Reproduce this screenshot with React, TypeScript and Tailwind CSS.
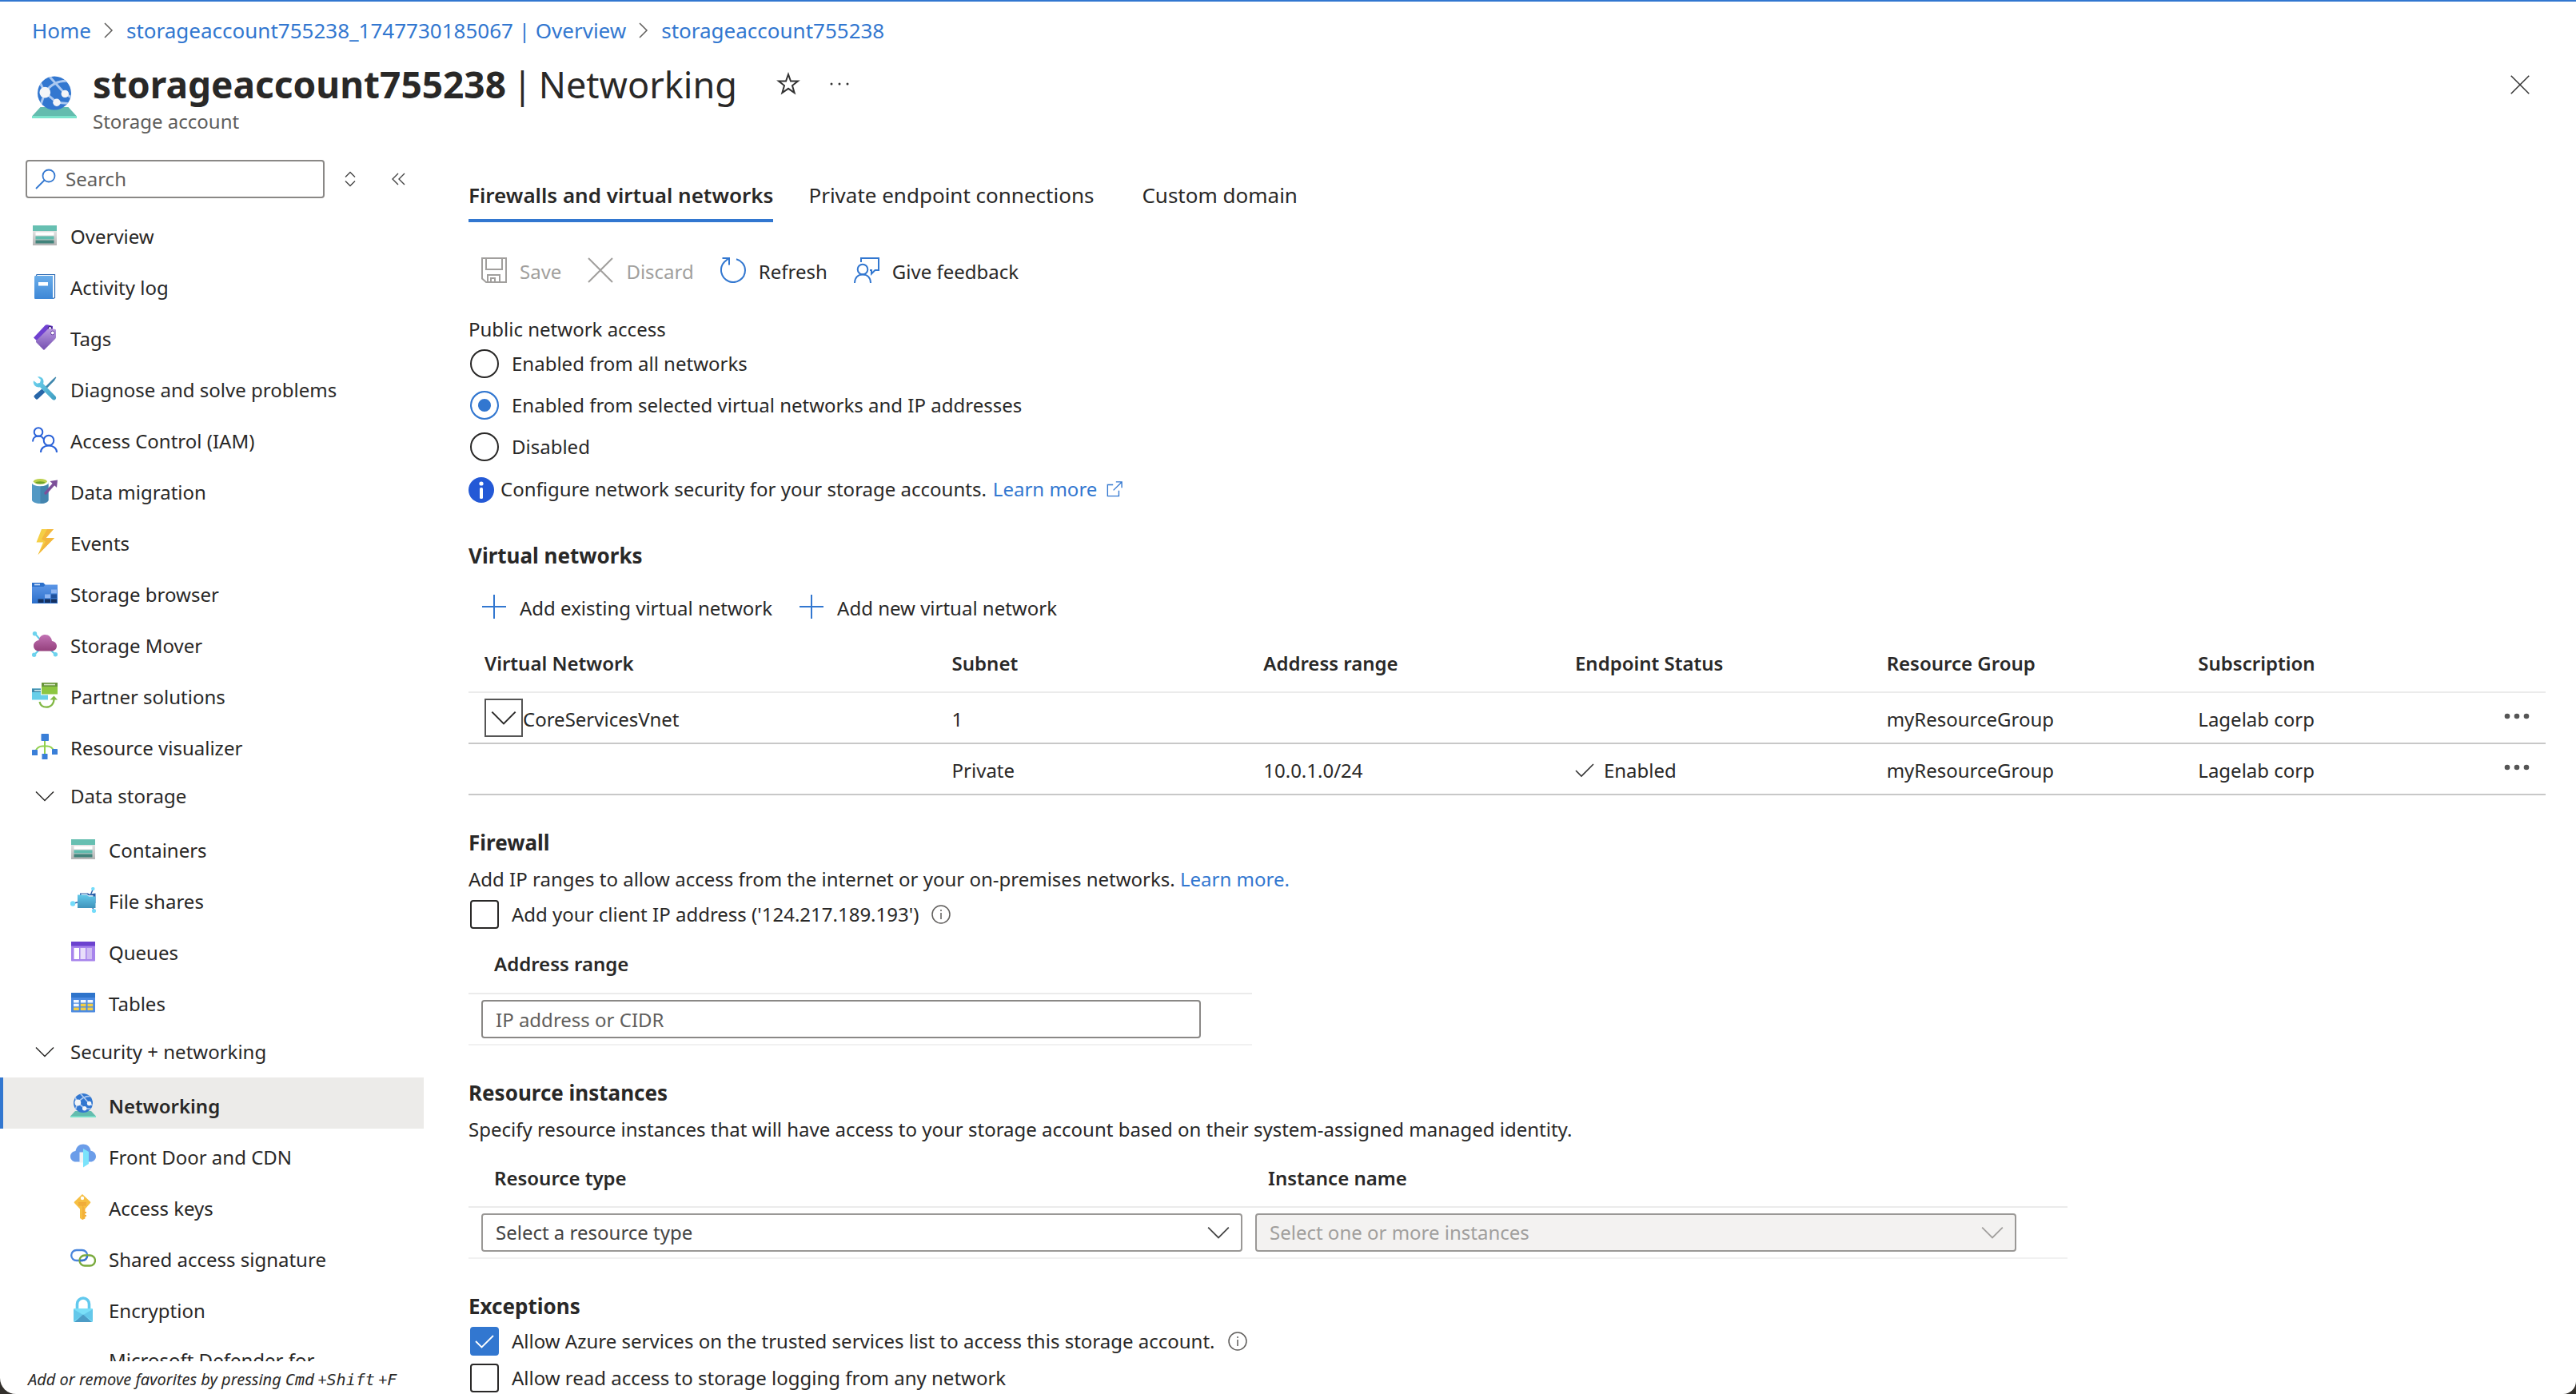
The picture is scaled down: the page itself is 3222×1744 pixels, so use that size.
import { useState, type ReactNode } from 'react';

/* ---------- Icons ---------- */

type IconProps = { className?: string };

function Svg({ children, className = 'size-8', box = '0 0 32 32' }: { children: ReactNode; className?: string; box?: string }) {
  return (
    <svg viewBox={box} className={`${className} shrink-0`} fill="none" aria-hidden="true">
      {children}
    </svg>
  );
}

const OverviewIcon = () => (
  <Svg>
    <defs>
      <linearGradient id="ovg" x1="0" y1="0" x2="0" y2="1">
        <stop offset="0" stopColor="#e8e8e8" />
        <stop offset="1" stopColor="#b3b3b3" />
      </linearGradient>
    </defs>
    <rect x="1" y="9" width="30" height="20" fill="url(#ovg)" />
    <rect x="1" y="4" width="30" height="7" fill="#66bfb1" />
    <rect x="4.5" y="12.5" width="23" height="4" fill="#fff" />
    <rect x="4.5" y="17.5" width="23" height="4" fill="#5fbbad" />
    <rect x="4.5" y="22.5" width="23" height="4" fill="#41837b" />
  </Svg>
);

const ActivityIcon = () => (
  <Svg>
    <defs>
      <linearGradient id="acg" x1="0" y1="0" x2="0" y2="1">
        <stop offset="0" stopColor="#6aadea" />
        <stop offset="1" stopColor="#3d87d6" />
      </linearGradient>
    </defs>
    <path d="M6 1.500h22.500v29L26 31.500H5V4z" fill="#fff" stroke="#2f6cb5" strokeWidth="1.2" />
    <path d="M3 4.500C3 3.700 3.500 3 4.500 3H26v29H4.500C3.500 32 3 31.500 3 30.500z" fill="url(#acg)" />
    <rect x="8" y="11" width="12" height="4.5" fill="#fff" />
  </Svg>
);

const TagsIcon = () => (
  <Svg>
    <defs>
      <linearGradient id="tgg" x1="0" y1="0" x2="0" y2="1">
        <stop offset="0" stopColor="#b99ae0" />
        <stop offset="1" stopColor="#7550b0" />
      </linearGradient>
    </defs>
    <path d="M2 16.500 16 1.500C17 .5 18 .3 19.500.3L26 2v7L9 23z" fill="#6f40d0" />
    <circle cx="22.5" cy="4.5" r="2.2" fill="#fff" stroke="#3f2380" strokeWidth="1.2" />
    <path d="M5 20.500 19.500 6c.6-.6 1.200-1 2-1l7 .8c1 .1 1.500.8 1.500 1.800V16c0 .8-.4 1.400-1 2L15.500 31.500c-.4.400-.8.400-1.200 0L5 22z" fill="url(#tgg)" />
    <circle cx="25.8" cy="10.5" r="2.4" fill="#fff" stroke="#6a45a5" strokeWidth="1" />
  </Svg>
);

const DiagnoseIcon = () => (
  <Svg>
    <defs>
      <linearGradient id="dgg" x1="0" y1="0" x2="1" y2="1">
        <stop offset="0" stopColor="#6fd6f2" />
        <stop offset="1" stopColor="#3f9cc0" />
      </linearGradient>
    </defs>
    <path d="m29.500 1.500.8.800-2.300 4L17 17.500l-2-2L26 4.500z" fill="#3f87ad" />
    <path d="m12.500 16.500 4 4L7.500 29c-1 1-1.800 1-2.600.2L3 27.200c-.8-.8-.7-1.700.2-2.600z" fill="#2866a8" />
    <path d="M7 1.500c3.500-.8 7.500 1.500 7.500 6 0 1-.2 1.600-.5 2.500l15.200 15.500c1.300 1.400 1.300 3 .1 4.200s-2.900 1.100-4.100-.1L10 14.200c-3.500 1-8-1.200-8.300-6.200l.3-1.700 4.500 3.500 3.500-1L11 5z" fill="url(#dgg)" />
  </Svg>
);

const AccessControlIcon = () => (
  <Svg>
    <g stroke="#2a62d8" strokeWidth="2">
      <circle cx="8" cy="6.5" r="5.3" />
      <path d="M1 18.500c0-4.500 3-7 7-7 3 0 5.500 1.500 6.500 4" />
      <circle cx="21" cy="17" r="6.3" />
      <path d="M11 32c0-5 4-8.500 10-8.500S31 27 31 32" />
    </g>
  </Svg>
);

const MigrationIcon = () => (
  <Svg>
    <path d="M0 5h20.500v22.500c0 2.500-4.500 4.500-10 4.500S0 30 0 27.500z" fill="#5399c4" />
    <path d="M10.500 8h10v19.500c0 2.500-4.500 4.500-10 4.500z" fill="#4384ae" />
    <ellipse cx="10.3" cy="5.5" rx="10.6" ry="4.8" fill="#fff" />
    <ellipse cx="10.3" cy="4.3" rx="8.5" ry="3.3" fill="#bcd14c" />
    <ellipse cx="10.3" cy="5.8" rx="6" ry="1.6" fill="#6fa32c" />
    <path d="m17 19 10-11" stroke="#7c4f99" strokeWidth="3.4" strokeLinecap="round" />
    <path d="m22.500 4 9.500-1.500-1 9.500z" fill="#7c4f99" />
  </Svg>
);

const EventsIcon = () => (
  <Svg>
    <path d="M12 0h15L17.500 11H28L7.500 32l6.500-15.500H5.500z" fill="#f5cf46" />
    <path d="M19 0h8l-9.500 11H28L7.500 32 17 15.500l-5-3z" fill="#f3b73e" />
  </Svg>
);

const BrowserIcon = () => (
  <Svg>
    <defs>
      <linearGradient id="brg" x1="0" y1="0" x2="0" y2="1">
        <stop offset="0" stopColor="#629bea" />
        <stop offset="1" stopColor="#2b6fcb" />
      </linearGradient>
    </defs>
    <path d="M0 3h14l2.500 2.500H32V29H0z" fill="url(#brg)" />
    <path d="M0 3h14l2.500 2.800L14.500 8H0z" fill="#2c70cb" />
    <rect x="3" y="4.5" width="7" height="1.8" fill="#cfe0fa" />
    <g fill="#8db5f2">
      <rect x="24" y="11.5" width="7" height="4.8" />
      <rect x="16" y="17.5" width="7" height="4.8" />
    </g>
    <rect x="24" y="17.5" width="7" height="4.8" fill="#1f519c" />
    <g fill="#14305f">
      <rect x="7.5" y="23.5" width="7" height="4.5" />
      <rect x="16" y="23.5" width="7" height="4.5" />
      <rect x="24" y="23.5" width="7" height="4.5" />
    </g>
  </Svg>
);

const MoverIcon = () => (
  <Svg>
    <defs>
      <linearGradient id="mvg" x1="0" y1="0" x2="0" y2="1">
        <stop offset="0" stopColor="#c273b4" />
        <stop offset="1" stopColor="#94407c" />
      </linearGradient>
    </defs>
    <g stroke="#5fcdea" strokeWidth="2">
      <path d="m3.500 2.500 7 8M2.500 29.500 10 22M29.500 29 22 22" />
    </g>
    <g fill="#6dd3ee">
      <circle cx="3.5" cy="2.7" r="2.7" />
      <circle cx="2.6" cy="29.3" r="2.7" />
      <circle cx="29.4" cy="28.7" r="2.7" />
    </g>
    <path d="M8.500 24.500C5 24.500 2 22 2 18s3-6.500 6.500-7C9.500 6.500 12.500 4 16.500 4c4.500 0 8 3.300 8.500 8 3.500.5 6 3 6 6.200 0 3.800-3 6.300-6.500 6.300z" fill="url(#mvg)" />
  </Svg>
);

const PartnerIcon = () => (
  <Svg>
    <rect x="0" y="7.5" width="20" height="14" fill="#69cfe9" />
    <rect x="0" y="7.5" width="12" height="4.5" fill="#3f8bab" />
    <rect x="3" y="9" width="8" height="1.5" fill="#d6eef5" />
    <rect x="11" y="0" width="21" height="15.5" fill="#fff" />
    <rect x="12" y="0" width="20" height="14.5" fill="#8dc641" />
    <rect x="12" y="0" width="20" height="5" fill="#68953a" />
    <rect x="15" y="1.7" width="14" height="1.6" fill="#dbe8c8" />
    <path d="M9.500 24c1 4.500 4.500 6.700 8.500 6.700 5.500 0 9.500-4 9.500-10" stroke="#82b845" strokeWidth="2.2" />
    <path d="m22.500 21.500 5-5 4.500 5z" fill="#82b845" />
  </Svg>
);

const VisualizerIcon = () => (
  <Svg>
    <path d="M16 8v19M4 22c2-4 4.500-6.500 9-6.500h6c4.500 0 7 2.500 9 6.500" stroke="#93d14f" strokeWidth="2" />
    <g fill="#3a7fd8">
      <rect x="11.5" y="0" width="9.5" height="9" rx=".8" />
      <rect x="0" y="20" width="7" height="7" rx=".6" />
      <rect x="12.5" y="25" width="7" height="7" rx=".6" />
      <rect x="25" y="19" width="7" height="7" rx=".6" />
    </g>
  </Svg>
);

const FileSharesIcon = () => (
  <Svg>
    <defs>
      <linearGradient id="fsg" x1="0" y1="0" x2="0" y2="1">
        <stop offset="0" stopColor="#62c8ea" />
        <stop offset="1" stopColor="#4093bb" />
      </linearGradient>
    </defs>
    <path d="m28.500 2-3 7M3 20.500l7-2M29.500 29l-3-6" stroke="#2b5fa8" strokeWidth="1.4" />
    <path d="M12 7.500h10l2 1.200 7.500-1.200V20H12z" fill="#2b5fa8" />
    <path d="M13.500 8.500h7l2 1.700h6V14h-15z" fill="#fff" />
    <path d="M9 9.500h11.500l2.500 2h8.500V26H9z" fill="url(#fsg)" />
    <g fill="#74dcfa">
      <circle cx="28.3" cy="2" r="2.2" />
      <circle cx="3" cy="20.5" r="3.2" />
      <circle cx="29.5" cy="29.5" r="2.6" />
    </g>
  </Svg>
);

const QueuesIcon = () => (
  <Svg>
    <rect x="1" y="4" width="30" height="24.5" rx=".8" fill="#a784ec" />
    <rect x="1" y="4" width="30" height="5.5" fill="#6c42cf" />
    <rect x="4.5" y="12" width="6.5" height="14" fill="#fff" />
    <rect x="12.5" y="12" width="6.5" height="14" fill="#e8defa" />
    <rect x="20.5" y="12" width="6.5" height="14" fill="#cfbcf3" />
  </Svg>
);

const TablesIcon = () => (
  <Svg>
    <rect x="1" y="4" width="30" height="24.5" rx=".8" fill="#4c8be2" />
    <rect x="1" y="4" width="30" height="6" fill="#2f74cb" />
    <g fill="#f2f7ff">
      <rect x="4" y="13" width="6.7" height="3.5" />
      <rect x="12.8" y="13" width="6.7" height="3.5" />
      <rect x="21.5" y="13" width="6.7" height="3.5" />
      <rect x="4" y="17.7" width="6.7" height="3.5" />
    </g>
    <g fill="#f4ce45">
      <rect x="12.8" y="17.7" width="6.7" height="3.5" />
      <rect x="21.5" y="17.7" width="6.7" height="3.5" />
      <rect x="4" y="22.5" width="6.7" height="3.5" />
      <rect x="12.8" y="22.5" width="6.7" height="3.5" />
      <rect x="21.5" y="22.5" width="6.7" height="3.5" />
    </g>
  </Svg>
);

const NetworkingIcon = ({ className = 'size-8' }: IconProps) => (
  <Svg className={className}>
    <defs>
      <clipPath id="globe">
        <circle cx="16" cy="14" r="12" />
      </clipPath>
    </defs>
    <path d="M6 24h20l6 6.500v1.500H0v-1.500z" fill="#63bcae" />
    <path d="M0 30.300h32V32H0z" fill="#7be3cb" />
    <circle cx="16" cy="14" r="12" fill="#3277d0" />
    <g stroke="#abc8f0" strokeWidth="1.7" clipPath="url(#globe)">
      <path d="M11.500 1 23.600 14.500M9.300 13.500C13 8.500 19 4.500 27 5.500M9.300 13.500l8.400 7.200M17.700 20.700 27 21.500M9.300 13.500 5.500 6M9.300 13.500 6 23M23.600 14.500 28 17" />
    </g>
    <g fill="#f3f5f8">
      <circle cx="9.3" cy="13.5" r="3.9" />
      <circle cx="23.6" cy="14.5" r="2.7" />
      <circle cx="17.7" cy="20.7" r="2.7" />
    </g>
  </Svg>
);

const FrontDoorIcon = () => (
  <Svg>
    <path d="M7 23.500c-4 0-7-3-7-6.800 0-3.700 2.800-6.400 6.500-6.800C7.500 5 11 1.500 16 1.500S25 5 25.500 9.700c3.800.5 6.500 3.300 6.500 7 0 3.800-3 6.800-7 6.800z" fill="#6b9de9" />
    <path d="M11.500 11.500H16v13h-4.500z" fill="#f1f2f5" />
    <path d="m16 7 7 4v15l-7 4.500z" fill="#7be3fb" />
  </Svg>
);

const KeyIcon = () => (
  <Svg>
    <path d="m15 0 10 9.500c.5.500.5 1 0 1.600L18.500 18.500v12L15 32l-3-2V18.500L5 11.100c-.5-.6-.5-1.100 0-1.600z" fill="#f6bf42" />
    <path d="m15 13 3 5v12l-3 2z" fill="#f3b03a" />
    <path d="M18 22h2v2h-2zM18 26h2v2h-2z" fill="#f3b03a" />
    <circle cx="15" cy="5" r="2.2" fill="#fff" />
    <path d="M10 11h10M10 13.500h10" stroke="#e8942f" strokeWidth="1.2" />
  </Svg>
);

const SignatureIcon = () => (
  <Svg>
    <rect x="1.2" y="6" width="20" height="13" rx="6.5" stroke="#4a86dd" strokeWidth="2.3" />
    <rect x="11.5" y="12.5" width="19.5" height="13" rx="6.5" stroke="#79aa3d" strokeWidth="2.3" />
    <path d="M12 19h3c3.500 0 6-2.500 6.200-6" stroke="#3a75cc" strokeWidth="2.3" />
  </Svg>
);

const EncryptionIcon = () => (
  <Svg>
    <path d="M8.500 18V9.500a7.500 7.500 0 0 1 15 0V18" stroke="#62c9ee" strokeWidth="3.6" />
    <rect x="4" y="15" width="24" height="17" rx="1" fill="#7adff8" />
    <path d="M4 16v15l12-8zM28 16v15l-12-8z" fill="#64c8ea" />
    <path d="m5 32 11-9.500L27 32z" fill="#4c9cc6" />
  </Svg>
);

const Chevron = ({ className = 'size-6' }: IconProps) => (
  <Svg className={className} box="0 0 24 24">
    <path d="m1 6.500 11 11 11-11" stroke="currentColor" strokeWidth="1.5" />
  </Svg>
);

const SaveIcon = () => (
  <Svg>
    <path d="M1 1h30v30H6l-5-4.500zM6 1v14h20V1M8 31v-9h15v9M12 31v-5h5v5" stroke="currentColor" strokeWidth="2" />
  </Svg>
);

const CrossIcon = ({ className = 'size-8' }: IconProps) => (
  <Svg className={className}>
    <path d="m1 1 30 30M31 1 1 31" stroke="currentColor" strokeWidth="2" />
  </Svg>
);

const RefreshIcon = () => (
  <Svg>
    <path d="M20 2.300C26.500 4 31 9.500 31 16a15 15 0 1 1-26-10.200L10 1.500" stroke="currentColor" strokeWidth="2" />
    <path d="M2.500 1H11v8.500" stroke="currentColor" strokeWidth="2" />
  </Svg>
);

const FeedbackIcon = () => (
  <Svg>
    <path d="M9 6V1h22v15h-4.500L22 20.500V16h-2M1 32c.2-6.500 4-10.500 10-10.500S20.800 25.500 21 32" stroke="currentColor" strokeWidth="2" />
    <circle cx="11" cy="15" r="6.3" stroke="currentColor" strokeWidth="2" />
  </Svg>
);

const PlusIcon = () => (
  <Svg>
    <path d="M16 1v30M1 16h30" stroke="currentColor" strokeWidth="2" />
  </Svg>
);

const InfoOutline = () => (
  <Svg className="size-6" box="0 0 24 24">
    <circle cx="12" cy="12" r="11" stroke="#605e5c" strokeWidth="1.5" />
    <path d="M12 10v8M12 6v2" stroke="#605e5c" strokeWidth="1.5" />
  </Svg>
);

const ExternalIcon = () => (
  <Svg className="size-5" box="0 0 22 22">
    <path d="M9 5H1.500v15.500H17V13M13 1h8v8M21 1 9.500 12.500" stroke="#3277d0" strokeWidth="1.5" />
  </Svg>
);

const MoreDots = () => (
  <Svg className="h-2 w-8" box="0 0 32 8">
    <circle cx="4" cy="4" r="3.3" fill="#555" />
    <circle cx="16" cy="4" r="3.3" fill="#555" />
    <circle cx="28" cy="4" r="3.3" fill="#555" />
  </Svg>
);

/* ---------- Sidebar ---------- */

type Item = { label: string; icon?: () => ReactNode };

const topItems: Item[] = [
  { label: 'Overview', icon: OverviewIcon },
  { label: 'Activity log', icon: ActivityIcon },
  { label: 'Tags', icon: TagsIcon },
  { label: 'Diagnose and solve problems', icon: DiagnoseIcon },
  { label: 'Access Control (IAM)', icon: AccessControlIcon },
  { label: 'Data migration', icon: MigrationIcon },
  { label: 'Events', icon: EventsIcon },
  { label: 'Storage browser', icon: BrowserIcon },
  { label: 'Storage Mover', icon: MoverIcon },
  { label: 'Partner solutions', icon: PartnerIcon },
  { label: 'Resource visualizer', icon: VisualizerIcon },
];

const storageItems: Item[] = [
  { label: 'Containers', icon: OverviewIcon },
  { label: 'File shares', icon: FileSharesIcon },
  { label: 'Queues', icon: QueuesIcon },
  { label: 'Tables', icon: TablesIcon },
];

const securityItems: Item[] = [
  { label: 'Networking', icon: NetworkingIcon },
  { label: 'Front Door and CDN', icon: FrontDoorIcon },
  { label: 'Access keys', icon: KeyIcon },
  { label: 'Shared access signature', icon: SignatureIcon },
  { label: 'Encryption', icon: EncryptionIcon },
  { label: 'Microsoft Defender for Cloud' },
];

function NavItem({ item, nested }: { item: Item; nested?: boolean }) {
  const active = item.label === 'Networking';
  const Icon = item.icon;
  return (
    <li>
      <a
        href="#"
        aria-current={active ? 'page' : undefined}
        className={`flex min-h-16 items-center gap-4 border-l-4 pb-2.5 ${Icon ? 'pt-3.5' : 'pt-3'} ${
          nested ? 'pl-[84px]' : 'pl-9'
        } ${active ? 'border-[#3277d0] bg-[#ecebe9] font-semibold' : 'border-transparent'}`}
      >
        {Icon ? <Icon /> : <span className="size-8" />}
        <span className={nested ? 'max-w-[320px] pt-1' : 'pt-1'}>{item.label}</span>
      </a>
    </li>
  );
}

function NavGroup({ label, items }: { label: string; items: Item[] }) {
  return (
    <li>
      <button type="button" aria-expanded="true" className="flex h-16 w-full items-center gap-5 pl-11 text-left">
        <Chevron />
        {label}
      </button>
      <ul>
        {items.map((i) => (
          <NavItem key={i.label} item={i} nested />
        ))}
      </ul>
    </li>
  );
}

function Sidebar() {
  return (
    <aside className="flex w-[530px] shrink-0 flex-col">
      <div className="flex items-center pb-3 pl-8 pt-6">
        <label className="flex h-12 w-[374px] items-center gap-3 rounded-sm border-2 border-[#8a8886] px-2.5">
          <Svg className="size-[26px]" box="0 0 26 26">
            <circle cx="17" cy="9" r="7.5" stroke="#3277d0" strokeWidth="1.8" />
            <path d="M11.500 14.500 1 25" stroke="#3277d0" strokeWidth="1.8" />
          </Svg>
          <input aria-label="Search" placeholder="Search" className="w-full min-w-0 bg-transparent outline-none placeholder:text-[#605e5c]" />
        </label>
        <button type="button" aria-label="Sort" className="ml-4 p-1">
          <Svg className="size-6" box="0 0 24 24">
            <path d="m6 9.500 6-6 6 6M6 14.500l6 6 6-6" stroke="#444" strokeWidth="1.4" />
          </Svg>
        </button>
        <button type="button" aria-label="Collapse menu" className="ml-7 p-1">
          <Svg className="size-6" box="0 0 24 24">
            <path d="m12 5-7 7 7 7M20 5l-7 7 7 7" stroke="#444" strokeWidth="1.4" />
          </Svg>
        </button>
      </div>
      <nav className="min-h-0 flex-1 overflow-hidden">
        <ul>
          {topItems.map((i) => (
            <NavItem key={i.label} item={i} />
          ))}
          <NavGroup label="Data storage" items={storageItems} />
          <NavGroup label="Security + networking" items={securityItems} />
        </ul>
      </nav>
      <p className="h-[41px] whitespace-nowrap pl-[35px] text-[20px] italic leading-[46px]">
        Add or remove favorites by pressing <kbd className="pr-1 font-['DejaVu_Sans_Mono',monospace] text-[20px]">Cmd</kbd>+
        <kbd className="pr-1 font-['DejaVu_Sans_Mono',monospace] text-[20px]">Shift</kbd>+
        <kbd className="font-['DejaVu_Sans_Mono',monospace] text-[20px]">F</kbd>
      </p>
    </aside>
  );
}

/* ---------- Main panel ---------- */

function Radio({ label, checked, onChange }: { label: string; checked: boolean; onChange: () => void }) {
  return (
    <label className="flex h-9 items-center gap-4">
      <input
        type="radio"
        name="access"
        checked={checked}
        onChange={onChange}
        className="size-9 appearance-none rounded-full border-2 border-[#292827] bg-white checked:border-[#3277d0] checked:bg-[#3277d0] checked:shadow-[inset_0_0_0_8px_white]"
      />
      {label}
    </label>
  );
}

function Check({ label, defaultChecked, info }: { label: string; defaultChecked?: boolean; info?: boolean }) {
  return (
    <div className="ml-0.5 flex h-9 items-center gap-4">
      <label className="flex items-center gap-4">
        <span className="grid size-9">
          <input
            type="checkbox"
            defaultChecked={defaultChecked}
            className="peer col-start-1 row-start-1 size-9 appearance-none rounded-sm border-2 border-[#292827] bg-white checked:border-[#3277d0] checked:bg-[#3277d0]"
          />
          <svg viewBox="0 0 36 36" fill="none" className="pointer-events-none col-start-1 row-start-1 hidden size-9 peer-checked:block" aria-hidden="true">
            <path d="m7 18 7.500 7.500L29 11" stroke="#fff" strokeWidth="1.8" />
          </svg>
        </span>
        {label}
      </label>
      {info && <InfoOutline />}
    </div>
  );
}

function ToolButton({ icon, label, disabled }: { icon: ReactNode; label: string; disabled?: boolean }) {
  return (
    <button type="button" disabled={disabled} className="flex h-16 items-center gap-4 pl-4 pr-[17px] disabled:text-[#a19f9d]">
      <span className={disabled ? '' : 'text-[#3277d0]'}>{icon}</span>
      <span className="pt-1">{label}</span>
    </button>
  );
}

function Heading({ children, className = 'mt-[41px]' }: { children: ReactNode; className?: string }) {
  return <h2 className={`${className} text-[26px] font-bold leading-9`}>{children}</h2>;
}

function MoreButton() {
  return (
    <button type="button" aria-label="More actions" className="ml-auto mr-5 flex pb-1">
      <MoreDots />
    </button>
  );
}

function VnetTable() {
  const th = 'pl-5 pt-1 text-left font-semibold';
  const td = 'pl-5 pt-1';
  return (
    <table className="w-full table-fixed border-collapse">
      <colgroup>
        <col className="w-[22.5%]" />
        <col className="w-[15%]" />
        <col className="w-[15%]" />
        <col className="w-[15%]" />
        <col className="w-[15%]" />
        <col className="w-[13.5%]" />
        <col className="w-[4%]" />
      </colgroup>
      <thead>
        <tr className="h-[75px] border-b-2 border-[#ebebeb]">
          <th className={th}>Virtual Network</th>
          <th className={th}>Subnet</th>
          <th className={th}>Address range</th>
          <th className={th}>Endpoint Status</th>
          <th className={th}>Resource Group</th>
          <th className={th}>Subscription</th>
          <td />
        </tr>
      </thead>
      <tbody>
        <tr className="h-16 border-b-2 border-[#c8c8c8]">
          <td className="pl-5">
            <div className="flex items-center">
              <button type="button" aria-label="Collapse CoreServicesVnet" className="flex size-12 items-center justify-center border-2 border-[#555]">
                <Chevron className="size-8" />
              </button>
              <span className="pt-1">CoreServicesVnet</span>
            </div>
          </td>
          <td className={td}>1</td>
          <td />
          <td />
          <td className={td}>myResourceGroup</td>
          <td className={td}>Lagelab corp</td>
          <td>
            <MoreButton />
          </td>
        </tr>
        <tr className="h-16 border-b-2 border-[#c8c8c8]">
          <td />
          <td className={td}>Private</td>
          <td className={td}>10.0.1.0/24</td>
          <td className={td}>
            <span className="flex items-center gap-3">
              <Svg className="size-6" box="0 0 24 24">
                <path d="m1 12 7 7L23 4" stroke="#333" strokeWidth="1.6" />
              </Svg>
              Enabled
            </span>
          </td>
          <td className={td}>myResourceGroup</td>
          <td className={td}>Lagelab corp</td>
          <td>
            <MoreButton />
          </td>
        </tr>
      </tbody>
    </table>
  );
}

function SelectBox({ id, placeholder, disabled }: { id: string; placeholder: string; disabled?: boolean }) {
  return (
    <div className={`grid flex-1 items-center ${disabled ? 'text-[#a19f9d]' : 'text-[#444]'}`}>
      <select
        id={id}
        disabled={disabled}
        className="col-start-1 row-start-1 h-12 w-full appearance-none rounded-sm border-2 border-[#9a9896] bg-white px-4 opacity-100 disabled:bg-[#f3f2f1]"
      >
        <option>{placeholder}</option>
      </select>
      <span className="pointer-events-none col-start-1 row-start-1 justify-self-end pr-4">
        <Chevron className="size-7" />
      </span>
    </div>
  );
}

function Main() {
  const [access, setAccess] = useState(1);
  const options = ['Enabled from all networks', 'Enabled from selected virtual networks and IP addresses', 'Disabled'];
  return (
    <main className="min-w-0 flex-1 pl-14 pr-[38px] pt-[42px]">
      <div role="tablist" className="flex h-[60px] gap-11 text-[26px]">
        <button type="button" role="tab" aria-selected="true" className="border-b-4 border-[#3277d0] pb-1 font-semibold">
          Firewalls and virtual networks
        </button>
        <button type="button" role="tab" aria-selected="false" className="border-b-4 border-transparent pb-1">
          Private endpoint connections
        </button>
        <button type="button" role="tab" aria-selected="false" className="ml-4 border-b-4 border-transparent pb-1">
          Custom domain
        </button>
      </div>

      <div className="mt-7 flex">
        <ToolButton icon={<SaveIcon />} label="Save" disabled />
        <ToolButton icon={<CrossIcon />} label="Discard" disabled />
        <ToolButton icon={<RefreshIcon />} label="Refresh" />
        <ToolButton icon={<FeedbackIcon />} label="Give feedback" />
      </div>

      <fieldset className="mt-6">
        <legend>Public network access</legend>
        <div className="ml-0.5 mt-[7px] flex flex-col gap-4">
          {options.map((o, i) => (
            <Radio key={o} label={o} checked={access === i} onChange={() => setAccess(i)} />
          ))}
        </div>
      </fieldset>

      <p className="mt-5 flex h-8 items-center gap-2">
        <Svg>
          <circle cx="16" cy="16" r="16" fill="#2459d6" />
          <circle cx="16" cy="8" r="2.6" fill="#fff" />
          <rect x="14" y="13" width="4" height="14" rx="1.5" fill="#fff" />
        </Svg>
        <span className="pb-0.5">Configure network security for your storage accounts.</span>
        <a href="#" className="flex items-center gap-3 pb-0.5 text-[#3277d0]">
          Learn more
          <ExternalIcon />
        </a>
      </p>

      <Heading className="mt-12">Virtual networks</Heading>
      <div className="mt-[14px] flex">
        <ToolButton icon={<PlusIcon />} label="Add existing virtual network" />
        <ToolButton icon={<PlusIcon />} label="Add new virtual network" />
      </div>
      <VnetTable />

      <Heading>Firewall</Heading>
      <p className="mt-[10px]">
        Add IP ranges to allow access from the internet or your on-premises networks.{' '}
        <a href="#" className="text-[#3277d0]">
          Learn more.
        </a>
      </p>
      <div className="mt-2">
        <Check label="Add your client IP address ('124.217.189.193')" info />
      </div>
      <div className="max-w-[980px]">
        <label htmlFor="cidr" className="flex h-[82px] items-center border-b-2 border-[#ebebeb] pl-8 pt-2 font-semibold">
          Address range
        </label>
        <div className="flex h-16 items-center border-b-2 border-[#f1f1f1] pl-4 pr-16">
          <input
            id="cidr"
            placeholder="IP address or CIDR"
            className="h-12 w-full rounded-sm border-2 border-[#8a8886] px-4 placeholder:text-[#605e5c]"
          />
        </div>
      </div>

      <Heading>Resource instances</Heading>
      <p className="mt-[10px]">
        Specify resource instances that will have access to your storage account based on their system-assigned managed identity.
      </p>
      <div className="max-w-[2000px]">
        <div className="flex h-20 items-center gap-4 border-b-2 border-[#ebebeb] pl-4 pr-16 pt-2 font-semibold">
          <label htmlFor="rtype" className="flex-1 pl-4">
            Resource type
          </label>
          <label htmlFor="iname" className="flex-1 pl-4">
            Instance name
          </label>
        </div>
        <div className="flex h-16 items-center gap-4 border-b-2 border-[#f1f1f1] pl-4 pr-16">
          <SelectBox id="rtype" placeholder="Select a resource type" />
          <SelectBox id="iname" placeholder="Select one or more instances" disabled />
        </div>
      </div>

      <Heading>Exceptions</Heading>
      <div className="mt-2 flex flex-col gap-[10px]">
        <Check label="Allow Azure services on the trusted services list to access this storage account." defaultChecked info />
        <Check label="Allow read access to storage logging from any network" />
      </div>
    </main>
  );
}

/* ---------- Page ---------- */

function Breadcrumb() {
  const sep = (
    <Svg className="h-5 w-3" box="0 0 12 20">
      <path d="m1 1 9 9-9 9" stroke="#605e5c" strokeWidth="1.5" />
    </Svg>
  );
  return (
    <nav aria-label="Breadcrumb" className="flex h-[72px] items-center gap-4 pl-10 text-[26px] text-[#3277d0]">
      <a href="#">Home</a>
      {sep}
      <a href="#">storageaccount755238_1747730185067 | Overview</a>
      {sep}
      <a href="#">storageaccount755238</a>
    </nav>
  );
}

export default function App() {
  return (
    <div className="h-screen overflow-hidden bg-[#33302c]">
      <div className="flex h-full flex-col overflow-hidden rounded-bl-[20px] rounded-br-[16px] border-t-2 border-[#3277d0] bg-white font-['Noto_Sans',sans-serif] text-[24px] leading-9 text-[#292827]">
        <Breadcrumb />
        <header className="flex h-[102px] shrink-0 items-start pl-10 pr-[58px]">
          <span className="pt-[18px]">
            <NetworkingIcon className="size-14" />
          </span>
          <div className="ml-5">
            <div className="flex h-[62px] items-center">
              <h1 className="flex items-baseline gap-2 text-[45px] leading-[62px]">
                <span className="text-[46px] font-bold">storageaccount755238</span>
                <span>|</span>
                <span>Networking</span>
              </h1>
              <button type="button" aria-label="Add to favorites" className="ml-12">
                <Svg className="size-8">
                  <path d="m16 4 3 8.500h9l-7 5.500 2.600 9-7.600-5.200L8.400 27l2.600-9-7-5.500h9z" stroke="#333" strokeWidth="2" />
                </Svg>
              </button>
              <button type="button" aria-label="More" className="ml-9">
                <Svg className="h-2 w-6" box="0 0 24 8">
                  <circle cx="2" cy="4" r="1.5" fill="#333" />
                  <circle cx="12" cy="4" r="1.5" fill="#333" />
                  <circle cx="22" cy="4" r="1.5" fill="#333" />
                </Svg>
              </button>
            </div>
            <p className="text-[24px] leading-[32px] text-[#605e5c]">Storage account</p>
          </div>
          <button type="button" aria-label="Close" className="ml-auto mt-5 text-[#333]">
            <CrossIcon className="size-6" />
          </button>
        </header>
        <div className="flex min-h-0 flex-1">
          <Sidebar />
          <Main />
        </div>
      </div>
    </div>
  );
}
